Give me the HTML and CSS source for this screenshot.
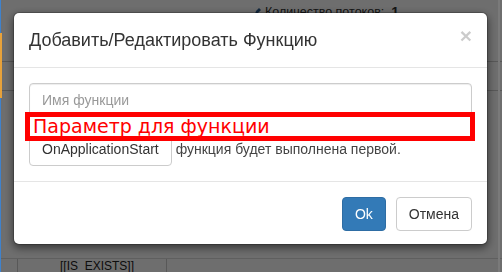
FILE: index.html
```html
<!DOCTYPE html>
<html lang="ru">
<head>
<meta charset="utf-8">
<title>Функция</title>
<link rel="stylesheet" href="styles.css">
</head>
<body>
<div class="page">
  <div class="topbar">
    <span class="threads"><svg class="ico" width="8" height="8" viewBox="0 0 8 8"><path d="M1 7 L2 4 L5 1 L7 3 L4 6 Z" fill="#2a5d8f"/></svg>Количество потоков: <b>1</b></span>
  </div>
  <div class="row"></div>
  <div class="spacer"></div>
  <div class="trow">
    <div class="cell c1"></div>
    <div class="cell c2">[[IS_EXISTS]]</div>
    <div class="cell c3"></div>
  </div>
</div>

<div class="backdrop"></div>
<div class="edge"><div class="edge-orange"></div></div>
<div class="scroll-edge"></div>

<div class="modal-wrap">
  <div class="modal">
    <div class="modal-header">
      <span class="close">×</span>
      <h4 class="modal-title">Добавить/Редактировать Функцию</h4>
    </div>
    <div class="modal-body">
      <div class="form-group">
        <div class="form-control"><span class="placeholder">Имя функции</span></div>
      </div>
      <div class="form-group">
        <span class="btn btn-default">OnApplicationStart</span> <span class="help">функция будет выполнена первой.</span>
      </div>
    </div>
    <div class="modal-footer">
      <span class="btn btn-primary">Ok</span>
      <span class="btn btn-default">Отмена</span>
    </div>
    <div class="note">Параметр для функции</div>
  </div>
</div>
</body>
</html>
```

FILE: styles.css
```css
html, body {
  margin: 0;
  padding: 0;
}
body {
  width: 502px;
  height: 272px;
  overflow: hidden;
  background: #fff;
  font-family: "Liberation Sans", Arial, sans-serif;
  font-size: 14px;
  color: #333;
}
.page {
  display: flex;
  flex-direction: column;
}
.topbar {
  height: 61px;
  border-bottom: 1px solid #ccc;
  padding-left: 254px;
}
.threads {
  display: inline-flex;
  align-items: center;
  gap: 3px;
  margin-top: 4px;
  font-size: 12.5px;
  color: #333;
}
.threads b { font-weight: bold; font-size: 14px; margin-left: 4px; }
.ico { margin-top: -3px; }
.row {
  height: 28px;
  border-bottom: 1px solid #ccc;
}
.spacer {
  height: 167px;
  border-bottom: 1px solid #ddd;
}
.trow {
  display: flex;
  height: 14px;
}
.cell {
  border-right: 1px solid #ccc;
  box-sizing: border-box;
}
.c1 { width: 18px; }
.c2 { width: 149px; padding-left: 42px; font-size: 12px; line-height: 14px; color: #222; }
.c3 { flex: 1; border-right: none; }

.backdrop {
  position: fixed;
  inset: 0;
  background: rgba(0, 0, 0, 0.57);
}
.edge {
  position: fixed;
  left: 0;
  top: 0;
  bottom: 0;
  width: 1px;
  background: #3f82cc;
}
.edge-orange {
  margin-top: 33px;
  width: 2px;
  height: 65px;
  background: #e8a23a;
}
.scroll-edge {
  position: fixed;
  top: 0;
  bottom: 0;
  right: 2px;
  width: 2px;
  background: #7a7a7a;
}

.modal-wrap {
  position: fixed;
  inset: 0;
  padding: 12px 0 0 13px;
}
.modal {
  position: relative;
  width: 475px;
  box-sizing: border-box;
  background: #fff;
  border: 1px solid rgba(0, 0, 0, 0.2);
  border-radius: 6px;
  box-shadow: 0 3px 9px rgba(0, 0, 0, 0.5);
  background-clip: padding-box;
}
.modal-header {
  padding: 15px;
  border-bottom: 1px solid #e5e5e5;
  display: flex;
  flex-direction: row-reverse;
  justify-content: space-between;
  align-items: flex-start;
}
.modal-title {
  margin: 0;
  font-size: 18px;
  font-weight: normal;
  line-height: 24px;
  color: #333;
}
.close {
  font-size: 21px;
  font-weight: bold;
  line-height: 1;
  color: #000;
  opacity: 0.2;
  margin-top: -3px;
}
.modal-body {
  padding: 15px 15px 0;
}
.form-group {
  margin-bottom: 15px;
}
.form-control {
  height: 34px;
  box-sizing: border-box;
  border: 1px solid #ccc;
  border-radius: 4px;
  padding: 6px 12px;
  line-height: 20px;
  box-shadow: inset 0 1px 1px rgba(0, 0, 0, 0.075);
}
.placeholder { color: #999; }
.btn {
  display: inline-block;
  box-sizing: border-box;
  height: 34px;
  padding: 6px 12px;
  line-height: 20px;
  font-size: 14px;
  border: 1px solid #ccc;
  border-radius: 4px;
  vertical-align: middle;
}
.btn-default {
  background: #fff;
  color: #333;
}
.btn-primary {
  background: #337ab7;
  border-color: #2e6da4;
  color: #fff;
}
.help {
  color: #444;
  vertical-align: middle;
}
.modal-footer {
  border-top: 1px solid #e5e5e5;
  padding: 15px 15px 13px;
  display: flex;
  justify-content: flex-end;
  gap: 10px;
}
.note {
  position: absolute;
  left: 11px;
  top: 99px;
  width: 450px;
  height: 29px;
  box-sizing: border-box;
  border: 5px solid #ff0000;
  background: #fff;
  color: #ff0000;
  font-family: "DejaVu Sans", sans-serif;
  font-size: 19px;
  line-height: 19px;
  padding-left: 3px;
}
```
